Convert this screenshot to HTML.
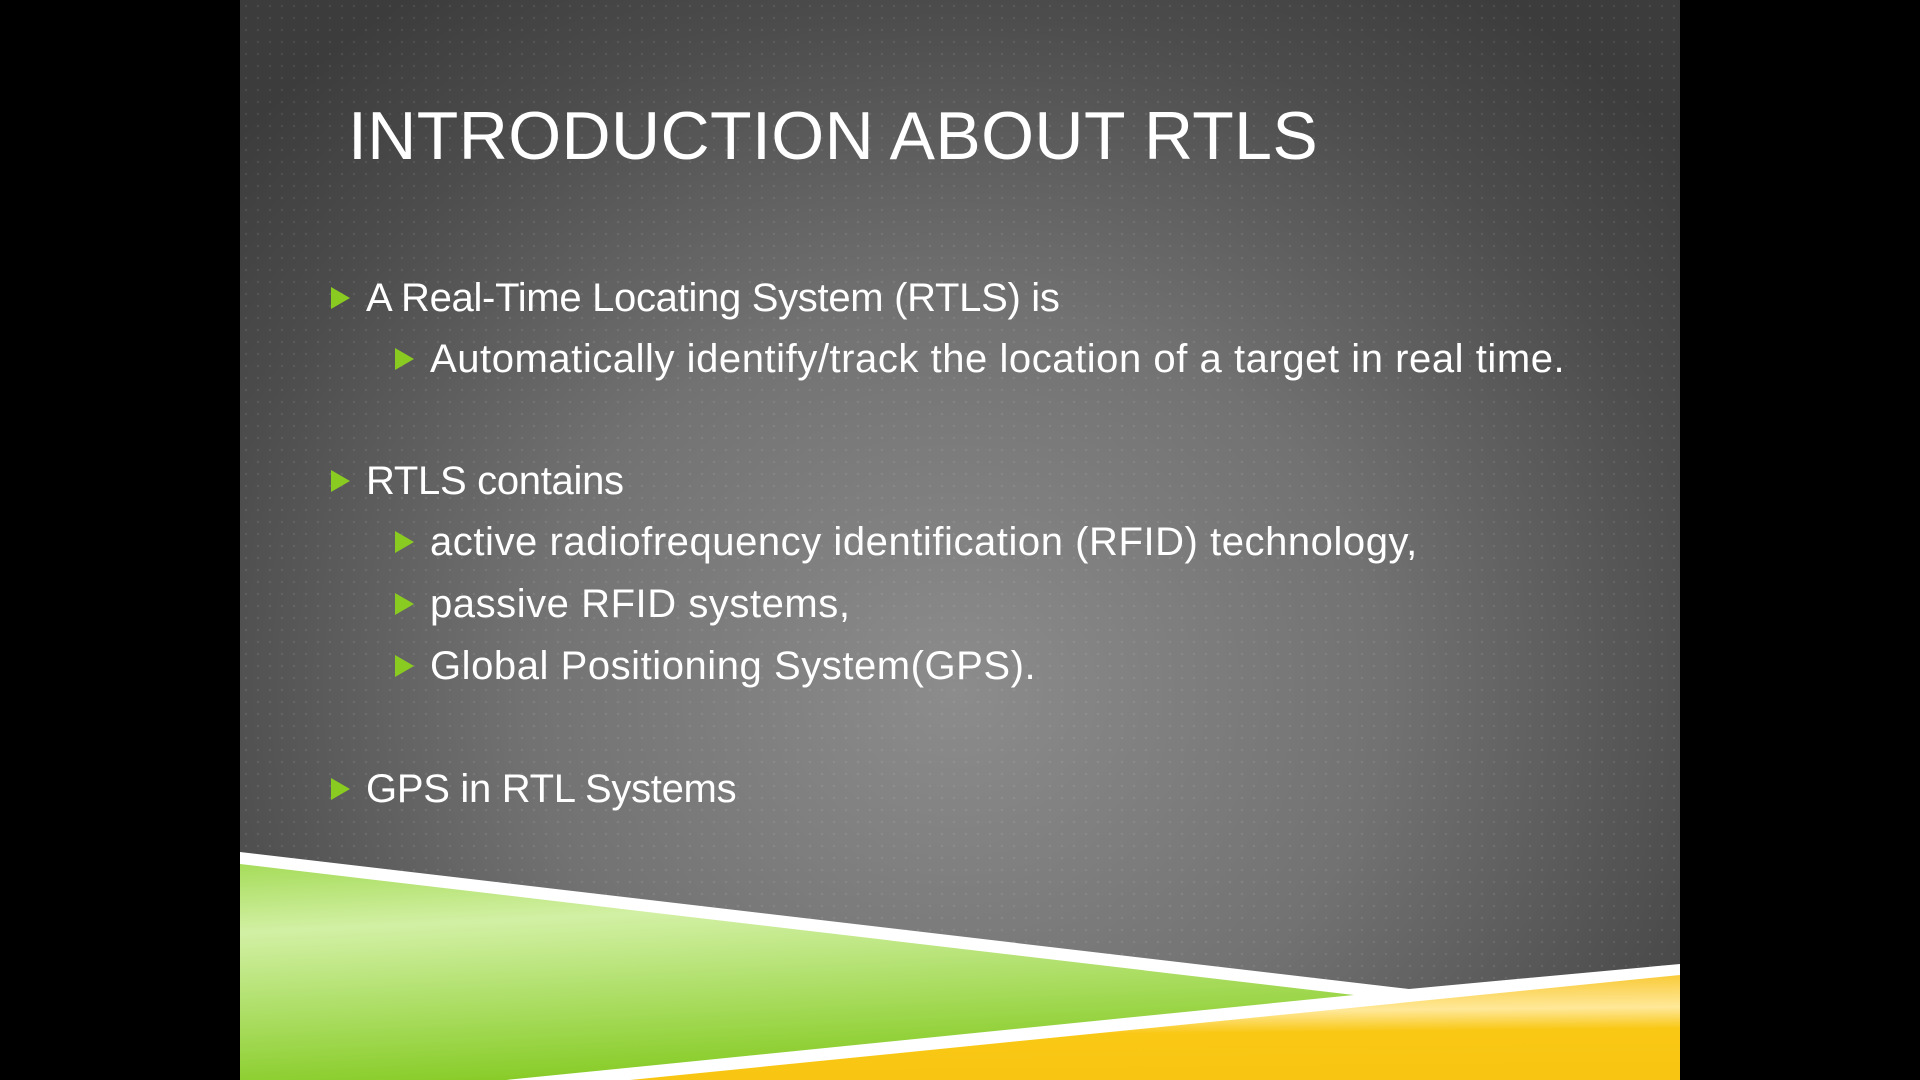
<!DOCTYPE html>
<html><head><meta charset="utf-8"><style>
html,body{margin:0;padding:0;background:#000;width:1920px;height:1080px;overflow:hidden}
#slide{position:absolute;left:240px;top:0;width:1440px;height:1080px;overflow:hidden;
background:radial-gradient(ellipse 950px 850px at 715px 690px,#8c8c8c 0%,#727272 45%,#4c4c4c 80%,#3c3c3c 100%);font-family:"Liberation Sans",sans-serif;color:#fff}
#dots{position:absolute;inset:0;background-image:radial-gradient(rgba(255,255,255,0.08) 1px,transparent 1.5px);background-size:12px 12px}
h1{position:absolute;left:108px;top:96px;margin:0;font-weight:normal;font-size:68px;white-space:nowrap;letter-spacing:0.4px;line-height:80px}
.b{position:absolute;white-space:nowrap;font-size:40px;line-height:50px;letter-spacing:-0.3px}
.b:before{content:"";position:absolute;left:-35px;top:14px;border-left:19px solid #8acb22;border-top:11px solid transparent;border-bottom:11px solid transparent}
.l1{left:126px}.l2{left:190px;letter-spacing:0.55px}
svg{position:absolute;left:0;top:0}
</style></head><body><div id="slide"><div id="dots"></div>
<h1>INTRODUCTION ABOUT RTLS</h1>
<div class="b l1" style="top:273px">A Real-Time Locating System (RTLS) is</div>
<div class="b l2" style="top:334px">Automatically identify/track the location of a target in real time.</div>
<div class="b l1" style="top:456px">RTLS contains</div>
<div class="b l2" style="top:517px">active radiofrequency identification (RFID) technology,</div>
<div class="b l2" style="top:579px">passive RFID systems,</div>
<div class="b l2" style="top:641px">Global Positioning System(GPS).</div>
<div class="b l1" style="top:764px">GPS in RTL Systems</div>
<svg width="1440" height="1080" viewBox="240 0 1440 1080">
<defs>
<linearGradient id="g" x1="0" y1="0" x2="0.25" y2="1" gradientUnits="objectBoundingBox">
<stop offset="0" stop-color="#a6dc5a"/><stop offset="0.3" stop-color="#d2f0a4"/><stop offset="0.5" stop-color="#bde681"/><stop offset="1" stop-color="#88cc28"/></linearGradient>
<linearGradient id="y" x1="0" y1="0" x2="0.1" y2="1">
<stop offset="0" stop-color="#f7c11a"/><stop offset="0.4" stop-color="#ffe899"/><stop offset="0.6" stop-color="#f9c815"/><stop offset="1" stop-color="#f8c512"/></linearGradient>
</defs>
<polygon points="240,852 1409,989 1680,964 1680,1080 240,1080" fill="#fff"/>
<polygon points="240,864 1354,995 506,1080 240,1080" fill="url(#g)"/>
<polygon points="630,1080 1680,975 1680,1080" fill="url(#y)"/>
</svg>
</div></body></html>
